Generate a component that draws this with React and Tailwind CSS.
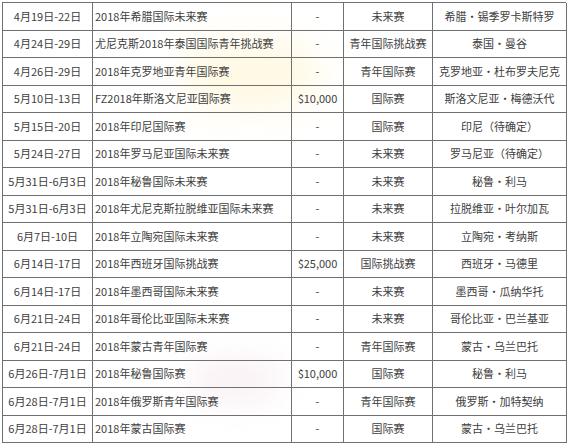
import React from "react";

const rows = [
  ["4月19日-22日", "2018年希腊国际未来赛", "-", "未来赛", "希腊·锡季罗卡斯特罗"],
  ["4月24日-29日", "尤尼克斯2018年泰国国际青年挑战赛", "-", "青年国际挑战赛", "泰国·曼谷"],
  ["4月26日-29日", "2018年克罗地亚青年国际赛", "-", "青年国际赛", "克罗地亚·杜布罗夫尼克"],
  ["5月10日-13日", "FZ2018年斯洛文尼亚国际赛", "$10,000", "国际赛", "斯洛文尼亚·梅德沃代"],
  ["5月15日-20日", "2018年印尼国际赛", "-", "国际赛", "印尼（待确定）"],
  ["5月24日-27日", "2018年罗马尼亚国际未来赛", "-", "未来赛", "罗马尼亚（待确定）"],
  ["5月31日-6月3日", "2018年秘鲁国际未来赛", "-", "未来赛", "秘鲁·利马"],
  ["5月31日-6月3日", "2018年尤尼克斯拉脱维亚国际未来赛", "-", "未来赛", "拉脱维亚·叶尔加瓦"],
  ["6月7日-10日", "2018年立陶宛国际未来赛", "-", "未来赛", "立陶宛·考纳斯"],
  ["6月14日-17日", "2018年西班牙国际挑战赛", "$25,000", "国际挑战赛", "西班牙·马德里"],
  ["6月14日-17日", "2018年墨西哥国际未来赛", "-", "未来赛", "墨西哥·瓜纳华托"],
  ["6月21日-24日", "2018年哥伦比亚国际未来赛", "-", "未来赛", "哥伦比亚·巴兰基亚"],
  ["6月21日-24日", "2018年蒙古青年国际赛", "-", "青年国际赛", "蒙古·乌兰巴托"],
  ["6月26日-7月1日", "2018年秘鲁国际赛", "$10,000", "国际赛", "秘鲁·利马"],
  ["6月28日-7月1日", "2018年俄罗斯青年国际赛", "-", "青年国际赛", "俄罗斯·加特契纳"],
  ["6月28日-7月1日", "2018年蒙古国际赛", "-", "国际赛", "蒙古·乌兰巴托"],
];

export default function App() {
  return (
    <div
      className="relative w-[568px] h-[446px] overflow-hidden bg-white text-[#404040]"
      style={{ fontFamily: '"Noto Sans CJK SC", "Noto Sans", sans-serif' }}
    >
      <div className="absolute left-[180px] top-[40px] w-[140px] h-[70px] rounded-full bg-[#fff6d8] blur-[18px] opacity-70" />
      <div className="absolute left-[190px] top-[360px] w-[90px] h-[40px] rounded-full bg-[#f6e6ec] blur-[16px] opacity-60" />
      <div className="relative ml-[2px] mt-[2px] w-[564px] border-l border-t border-[#707070] grid grid-cols-[90px_199px_52px_89px_134px] text-[11px] leading-none">
        {rows.map((r, i) => (
          <React.Fragment key={i}>
            <div className="h-[27.5px] border-r border-b border-[#707070] flex items-center justify-center whitespace-nowrap">{r[0]}</div>
            <div className="h-[27.5px] border-r border-b border-[#707070] flex items-center pl-[2px] whitespace-nowrap">{r[1]}</div>
            <div className="h-[27.5px] border-r border-b border-[#707070] flex items-center justify-center whitespace-nowrap">{r[2]}</div>
            <div className="h-[27.5px] border-r border-b border-[#707070] flex items-center justify-center whitespace-nowrap">{r[3]}</div>
            <div className="h-[27.5px] border-r border-b border-[#707070] flex items-center justify-center whitespace-nowrap">{r[4]}</div>
          </React.Fragment>
        ))}
      </div>
    </div>
  );
}
